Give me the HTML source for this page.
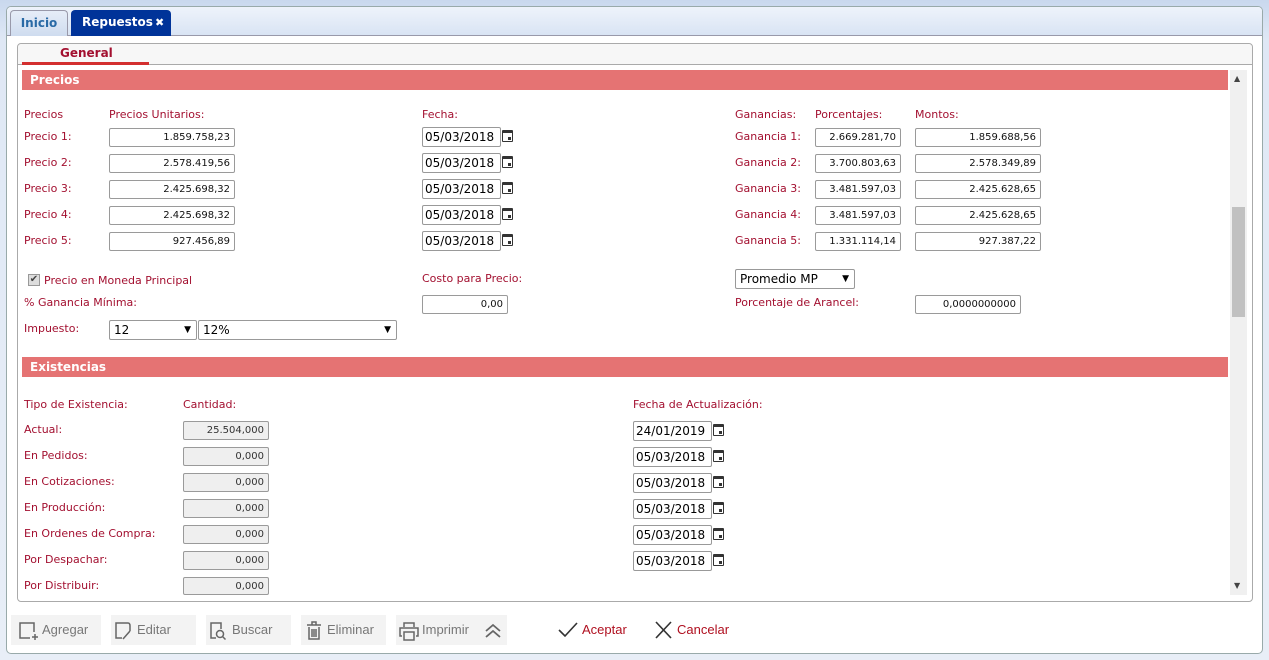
<!DOCTYPE html>
<html><head><meta charset="utf-8"><style>
*{box-sizing:border-box;margin:0;padding:0}
body{width:1269px;height:660px;position:relative;overflow:hidden;background:linear-gradient(#c9d8ee,#dfe8f5 40px,#e8eef7);font-family:"DejaVu Sans","Liberation Sans",sans-serif;font-size:11px}
.a{position:absolute}
.l{position:absolute;color:#a31030;font-size:11px;line-height:16px;white-space:nowrap}
.i{position:absolute;height:19px;border:1px solid #9a9a9a;border-radius:2px;background:#fff;font-size:10px;text-align:right;padding-right:4px;line-height:17px;color:#111}
.g{background:#efefef;color:#333}
.d{position:absolute;width:79px;height:20px;border:1px solid #999;border-radius:2px;background:#fff;font-size:12px;line-height:18px;padding-left:2px;color:#000}
.cal{position:absolute;width:11px;height:12px;border:1.5px solid #333;border-top-width:3px;border-radius:1px}
.cal:after{content:"";position:absolute;right:1px;bottom:1px;width:3px;height:3px;background:#333}
.s{position:absolute;height:20px;border:1px solid #999;border-radius:2px;background:#fff;font-size:12px;line-height:18px;padding-left:4px;color:#000}
.s:after{content:"▼";position:absolute;right:5px;top:0;font-size:9px}
.bar{position:absolute;left:22px;width:1206px;height:20px;background:#e57373;color:#fff;font-weight:bold;font-size:12px;line-height:20px;padding-left:8px}
.btn{position:absolute;top:615px;height:30px;background:#f3f3f3;color:#777;font-size:13px;line-height:30px;font-family:"Liberation Sans",sans-serif}
</style></head><body>
<div class="a" style="left:6px;top:6px;width:1257px;height:648px;border:1px solid #9aa;border-radius:5px;background:#fff"></div>
<div class="a" style="left:7px;top:7px;width:1255px;height:29px;background:linear-gradient(#eef3fb,#d9e4f4);border-bottom:1px solid #99a;border-radius:4px 4px 0 0"></div>
<div class="a" style="left:10px;top:10px;width:58px;height:26px;border:1px solid #99a;border-bottom:none;border-radius:4px 4px 0 0;background:linear-gradient(#e6edf8,#cfdcef);color:#2a6aa6;font-weight:bold;font-size:12px;line-height:25px;text-align:center">Inicio</div>
<div class="a" style="left:71px;top:10px;width:100px;height:26px;border-radius:4px 4px 0 0;background:#003399;color:#fff;font-weight:bold;font-size:12px;line-height:25px;padding-left:11px;white-space:nowrap">Repuestos<span style="position:absolute;left:84px;font-size:11px">✖</span></div>
<div class="a" style="left:17px;top:43px;width:1236px;height:559px;border:1px solid #aaa;border-radius:4px;background:#fff"></div>
<div class="a" style="left:18px;top:44px;width:1234px;height:21px;background:#f7f7f7;border-bottom:1px solid #aaa;border-radius:4px 4px 0 0"></div>
<div class="a" style="left:60px;top:46px;color:#a31030;font-weight:bold;font-size:12px">General</div>
<div class="a" style="left:22px;top:62px;width:127px;height:3px;background:#d32f2f"></div>
<div class="a" style="left:1230px;top:70px;width:17px;height:525px;background:#f0f0f0"></div>
<div class="a" style="left:1234px;top:74px;font-size:8px;color:#444">▲</div>
<div class="a" style="left:1234px;top:581px;font-size:8px;color:#444">▼</div>
<div class="a" style="left:1232px;top:207px;width:13px;height:110px;background:#c1c1c1"></div>

<div class="bar" style="top:70px">Precios</div>
<div class="l" style="left:24px;top:107px">Precios</div>
<div class="l" style="left:109px;top:107px">Precios Unitarios:</div>
<div class="l" style="left:422px;top:107px">Fecha:</div>
<div class="l" style="left:735px;top:107px">Ganancias:</div>
<div class="l" style="left:815px;top:107px">Porcentajes:</div>
<div class="l" style="left:915px;top:107px">Montos:</div>

<div class="l" style="left:24px;top:129px">Precio 1:</div><div class="i" style="left:109px;top:128px;width:126px">1.859.758,23</div><div class="d" style="left:422px;top:127px">05/03/2018</div><div class="cal" style="left:502px;top:130px"></div><div class="l" style="left:735px;top:129px">Ganancia 1:</div><div class="i" style="left:815px;top:128px;width:86px">2.669.281,70</div><div class="i" style="left:915px;top:128px;width:126px">1.859.688,56</div>
<div class="l" style="left:24px;top:155px">Precio 2:</div><div class="i" style="left:109px;top:154px;width:126px">2.578.419,56</div><div class="d" style="left:422px;top:153px">05/03/2018</div><div class="cal" style="left:502px;top:156px"></div><div class="l" style="left:735px;top:155px">Ganancia 2:</div><div class="i" style="left:815px;top:154px;width:86px">3.700.803,63</div><div class="i" style="left:915px;top:154px;width:126px">2.578.349,89</div>
<div class="l" style="left:24px;top:181px">Precio 3:</div><div class="i" style="left:109px;top:180px;width:126px">2.425.698,32</div><div class="d" style="left:422px;top:179px">05/03/2018</div><div class="cal" style="left:502px;top:182px"></div><div class="l" style="left:735px;top:181px">Ganancia 3:</div><div class="i" style="left:815px;top:180px;width:86px">3.481.597,03</div><div class="i" style="left:915px;top:180px;width:126px">2.425.628,65</div>
<div class="l" style="left:24px;top:207px">Precio 4:</div><div class="i" style="left:109px;top:206px;width:126px">2.425.698,32</div><div class="d" style="left:422px;top:205px">05/03/2018</div><div class="cal" style="left:502px;top:208px"></div><div class="l" style="left:735px;top:207px">Ganancia 4:</div><div class="i" style="left:815px;top:206px;width:86px">3.481.597,03</div><div class="i" style="left:915px;top:206px;width:126px">2.425.628,65</div>
<div class="l" style="left:24px;top:233px">Precio 5:</div><div class="i" style="left:109px;top:232px;width:126px">927.456,89</div><div class="d" style="left:422px;top:231px">05/03/2018</div><div class="cal" style="left:502px;top:234px"></div><div class="l" style="left:735px;top:233px">Ganancia 5:</div><div class="i" style="left:815px;top:232px;width:86px">1.331.114,14</div><div class="i" style="left:915px;top:232px;width:126px">927.387,22</div>

<div class="a" style="left:28px;top:274px;width:12px;height:12px;border:1px solid #999;background:#ddd;font-size:10px;line-height:10px;color:#444;text-align:center">✔</div>
<div class="l" style="left:44px;top:273px">Precio en Moneda Principal</div>
<div class="l" style="left:422px;top:271px">Costo para Precio:</div>
<div class="s" style="left:735px;top:269px;width:120px">Promedio MP</div>
<div class="l" style="left:24px;top:295px">% Ganancia Mínima:</div>
<div class="i" style="left:422px;top:295px;width:86px">0,00</div>
<div class="l" style="left:735px;top:295px">Porcentaje de Arancel:</div>
<div class="i" style="left:915px;top:295px;width:106px">0,0000000000</div>
<div class="l" style="left:24px;top:321px">Impuesto:</div>
<div class="s" style="left:109px;top:320px;width:88px">12</div>
<div class="s" style="left:198px;top:320px;width:199px">12%</div>

<div class="bar" style="top:357px">Existencias</div>
<div class="l" style="left:24px;top:397px">Tipo de Existencia:</div>
<div class="l" style="left:183px;top:397px">Cantidad:</div>
<div class="l" style="left:633px;top:397px">Fecha de Actualización:</div>

<div class="l" style="left:24px;top:422px">Actual:</div><div class="i g" style="left:183px;top:421px;width:86px">25.504,000</div><div class="d" style="left:633px;top:421px">24/01/2019</div><div class="cal" style="left:713px;top:424px"></div>
<div class="l" style="left:24px;top:448px">En Pedidos:</div><div class="i g" style="left:183px;top:447px;width:86px">0,000</div><div class="d" style="left:633px;top:447px">05/03/2018</div><div class="cal" style="left:713px;top:450px"></div>
<div class="l" style="left:24px;top:474px">En Cotizaciones:</div><div class="i g" style="left:183px;top:473px;width:86px">0,000</div><div class="d" style="left:633px;top:473px">05/03/2018</div><div class="cal" style="left:713px;top:476px"></div>
<div class="l" style="left:24px;top:500px">En Producción:</div><div class="i g" style="left:183px;top:499px;width:86px">0,000</div><div class="d" style="left:633px;top:499px">05/03/2018</div><div class="cal" style="left:713px;top:502px"></div>
<div class="l" style="left:24px;top:526px">En Ordenes de Compra:</div><div class="i g" style="left:183px;top:525px;width:86px">0,000</div><div class="d" style="left:633px;top:525px">05/03/2018</div><div class="cal" style="left:713px;top:528px"></div>
<div class="l" style="left:24px;top:552px">Por Despachar:</div><div class="i g" style="left:183px;top:551px;width:86px">0,000</div><div class="d" style="left:633px;top:551px">05/03/2018</div><div class="cal" style="left:713px;top:554px"></div>
<div class="l" style="left:24px;top:578px">Por Distribuir:</div><div class="i g" style="left:183px;top:577px;width:86px;height:18px">0,000</div>
<div class="a" style="left:18px;top:595px;width:1234px;height:6px;background:#fff;border-radius:0 0 4px 4px"></div>

<div class="btn" style="left:11px;width:90px"><svg class="a" style="left:7px;top:6px" width="20" height="20" fill="none" stroke="#666" stroke-width="1.5"><path d="M12 17H2V2h14v9"/><path d="M17 13v6M14 16h6"/></svg><span style="position:absolute;left:31px">Agregar</span></div>
<div class="btn" style="left:111px;width:85px"><svg class="a" style="left:3px;top:6px" width="20" height="20" fill="none" stroke="#666" stroke-width="1.5"><path d="M8 17H2V2h12q2 0 2 3v5"/><path d="M9 18l7-8"/></svg><span style="position:absolute;left:26px">Editar</span></div>
<div class="btn" style="left:206px;width:85px"><svg class="a" style="left:3px;top:6px" width="20" height="20" fill="none" stroke="#666" stroke-width="1.5"><path d="M7 17H2V2h10v6"/><circle cx="11" cy="13" r="3.5"/><path d="M13.5 15.5l3 3"/></svg><span style="position:absolute;left:26px">Buscar</span></div>
<div class="btn" style="left:301px;width:85px"><svg class="a" style="left:3px;top:5px" width="20" height="20" fill="none" stroke="#666" stroke-width="1.5"><path d="M3 5h14M8 5V2h4v3M5 7v12h10V7M8 9v8M10 9v8M12 9v8"/></svg><span style="position:absolute;left:26px">Eliminar</span></div>
<div class="btn" style="left:396px;width:111px"><svg class="a" style="left:3px;top:6px" width="20" height="20" fill="none" stroke="#666" stroke-width="1.5"><path d="M5 6V2h10v4M3 15H1V7h18v8h-2M5 11h10v8H5z"/></svg><span style="position:absolute;left:26px">Imprimir</span><svg class="a" style="left:88px;top:7px" width="18" height="16" fill="none" stroke="#666" stroke-width="1.8"><path d="M2 9l7-6 7 6M2 15l7-6 7 6"/></svg></div>
<svg class="a" style="left:558px;top:621px" width="20" height="18" fill="none" stroke="#333" stroke-width="1.6"><path d="M1 9l6 6L19 2"/></svg>
<div class="a" style="left:582px;top:622px;color:#b01020;font-size:13px;font-family:'Liberation Sans',sans-serif">Aceptar</div>
<svg class="a" style="left:655px;top:621px" width="18" height="18" fill="none" stroke="#333" stroke-width="1.6"><path d="M1 1l15 16M16 1L1 17"/></svg>
<div class="a" style="left:677px;top:622px;color:#b01020;font-size:13px;font-family:'Liberation Sans',sans-serif">Cancelar</div>
</body></html>
